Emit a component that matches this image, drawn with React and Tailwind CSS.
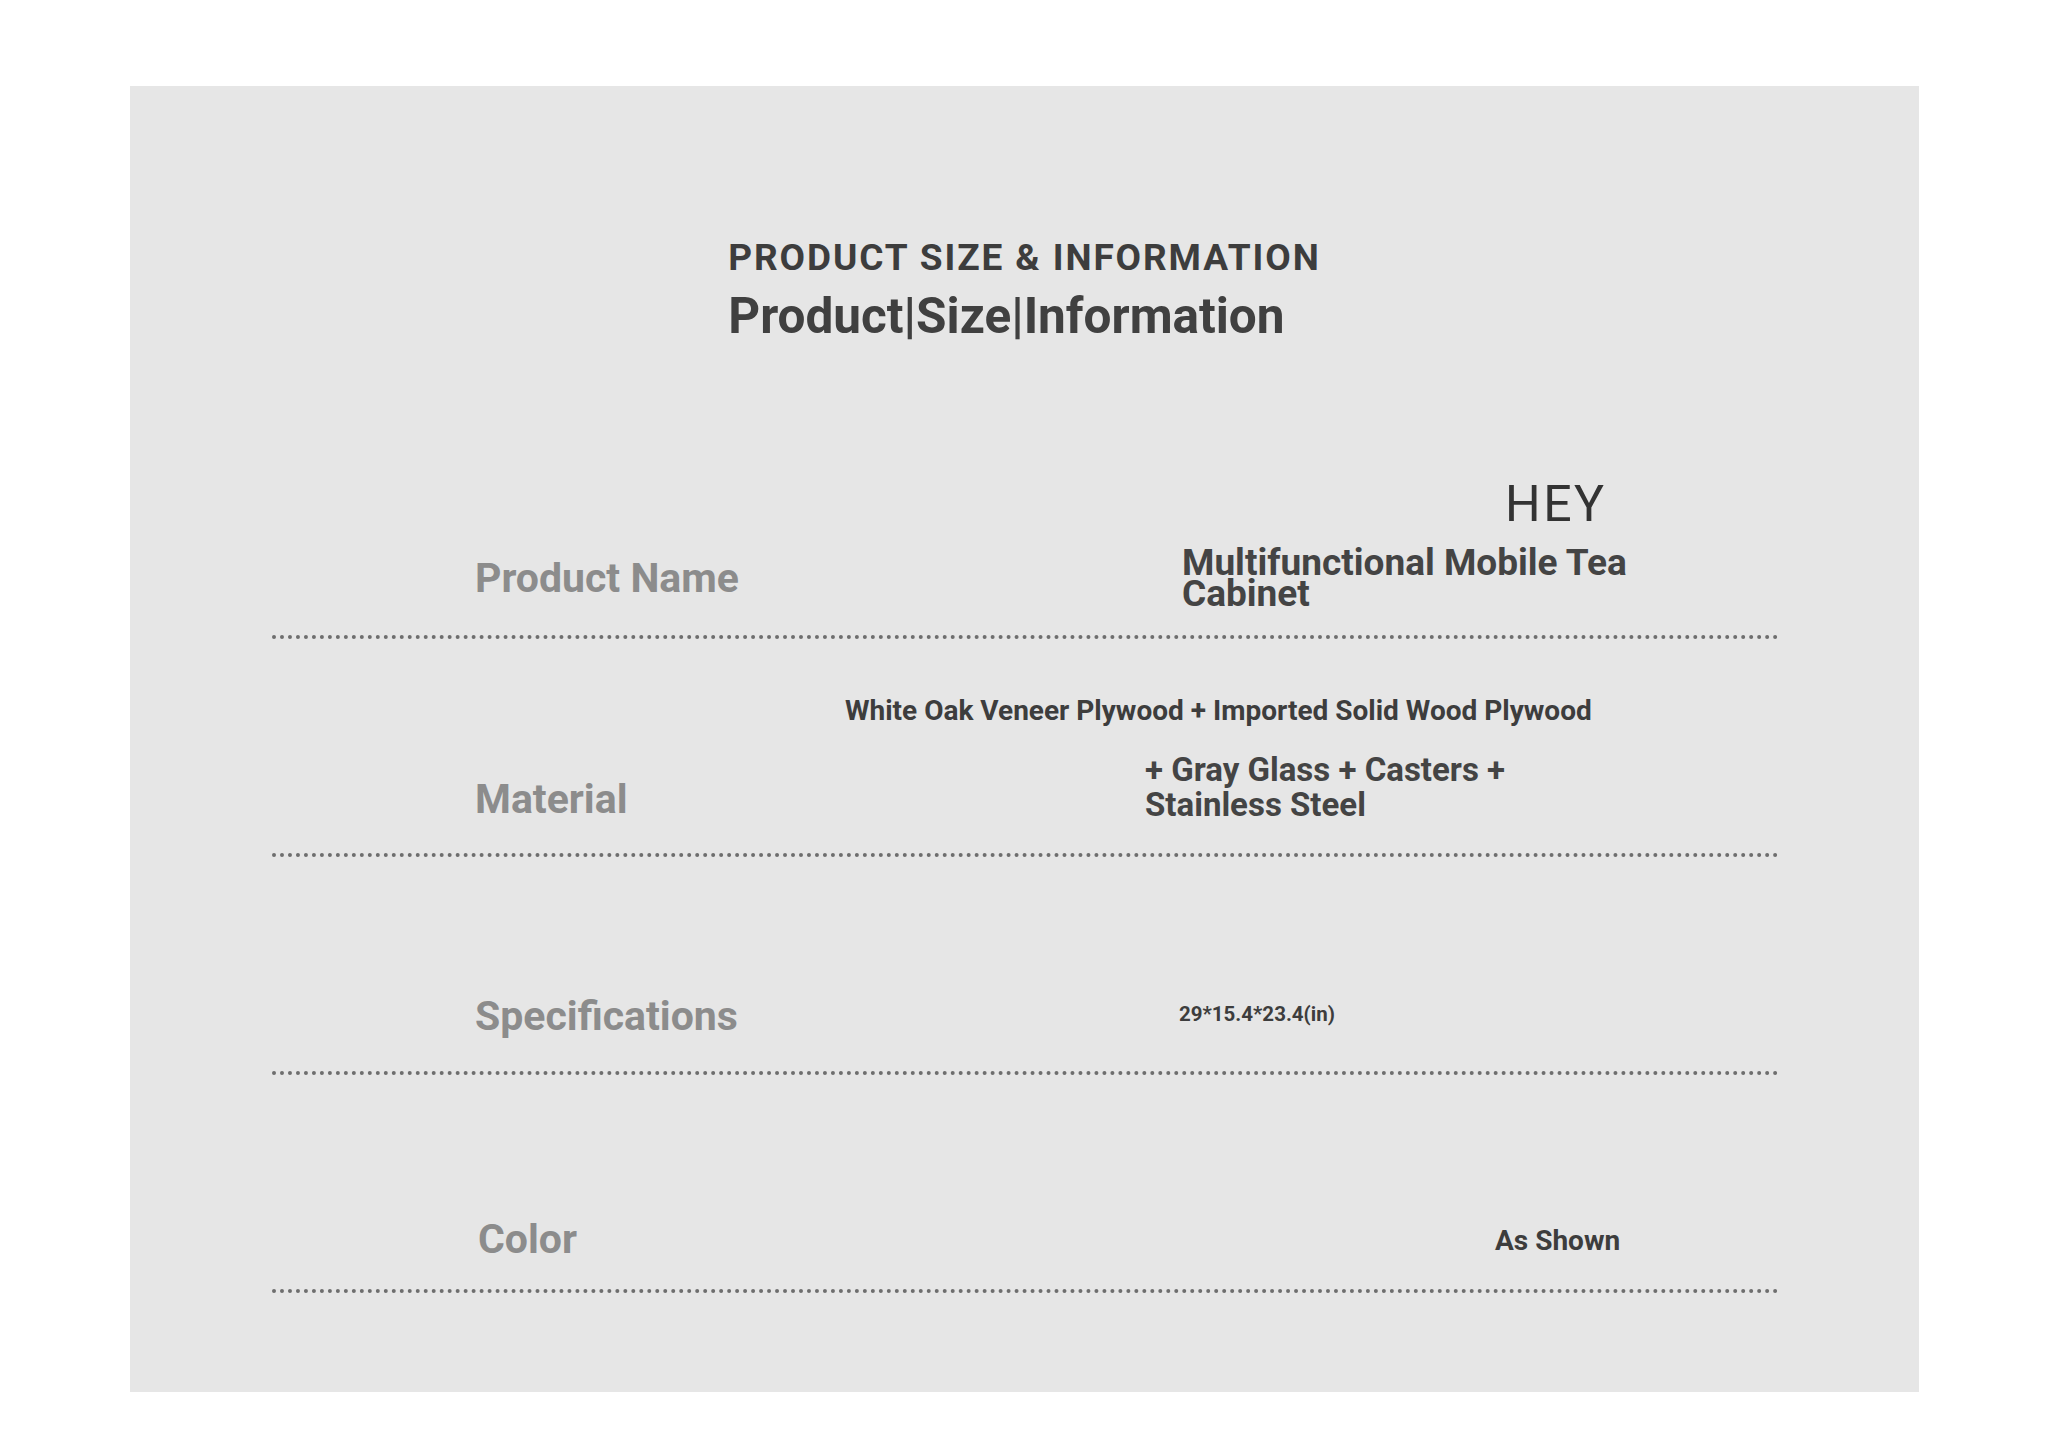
export default function App() {
  const font = { fontFamily: 'Roboto, "Liberation Sans", sans-serif' };

  return (
    <div className="w-[2048px] h-[1450px] bg-white pt-[86px] pl-[130px]" style={font}>
      <div className="w-[1789px] h-[1306px] bg-[#e6e6e6] flex flex-col">

        {/* Title */}
        <div className="pt-[153px] flex justify-center">
          <div className="flex flex-col gap-[14px]">
            <div className="text-[37px] leading-[38px] font-bold tracking-[1.9px] text-[#3d3d3d]">
              PRODUCT SIZE &amp; INFORMATION
            </div>
            <div className="text-[49.5px] leading-[50px] font-bold text-[#404040]">
              Product|Size|Information
            </div>
          </div>
        </div>

        {/* Rows */}
        <div className="ml-[142px] w-[1507px] flex flex-col">

          {/* Product Name */}
          <div className="h-[298px] flex items-end border-b-4 border-dotted border-[#6e6e6e]">
            <div className="ml-[203px] w-[370px] mb-[37px] text-[41px] leading-[40px] font-bold text-[#8c8c8c]">
              Product Name
            </div>
            <div className="ml-[337px] mb-[26px] flex flex-col gap-[18px]">
              <div className="ml-[323px] text-[50px] leading-[50px] font-normal tracking-[2.5px] text-[#333333]">
                HEY
              </div>
              <div className="text-[37px] leading-[31px] font-bold text-[#444444]">
                Multifunctional Mobile Tea
                <br />
                Cabinet
              </div>
            </div>
          </div>

          {/* Material */}
          <div className="h-[218px] flex items-end border-b-4 border-dotted border-[#6e6e6e]">
            <div className="ml-[203px] w-[370px] mb-[34px] text-[41px] leading-[40px] font-bold text-[#8c8c8c]">
              Material
            </div>
            <div className="mb-[31px] flex flex-col gap-[27px]">
              <div className="text-[28px] leading-[28px] font-bold text-[#3d3d3d] whitespace-nowrap">
                White Oak Veneer Plywood + Imported Solid Wood Plywood
              </div>
              <div className="ml-[300px] text-[33px] leading-[35px] font-bold text-[#444444]">
                + Gray Glass + Casters +
                <br />
                Stainless Steel
              </div>
            </div>
          </div>

          {/* Specifications */}
          <div className="h-[218px] flex items-end border-b-4 border-dotted border-[#6e6e6e]">
            <div className="ml-[203px] w-[370px] mb-[35px] text-[41px] leading-[40px] font-bold text-[#8c8c8c]">
              Specifications
            </div>
            <div className="ml-[334px] mb-[47px] text-[20.5px] leading-[20px] font-bold text-[#3d3d3d]">
              29*15.4*23.4(in)
            </div>
          </div>

          {/* Color */}
          <div className="h-[218px] flex items-end border-b-4 border-dotted border-[#6e6e6e]">
            <div className="ml-[206px] w-[367px] mb-[30px] text-[41px] leading-[40px] font-bold text-[#8c8c8c]">
              Color
            </div>
            <div className="ml-[650px] mb-[34px] text-[28px] leading-[28px] font-bold text-[#3d3d3d]">
              As Shown
            </div>
          </div>

        </div>
      </div>
    </div>
  );
}
